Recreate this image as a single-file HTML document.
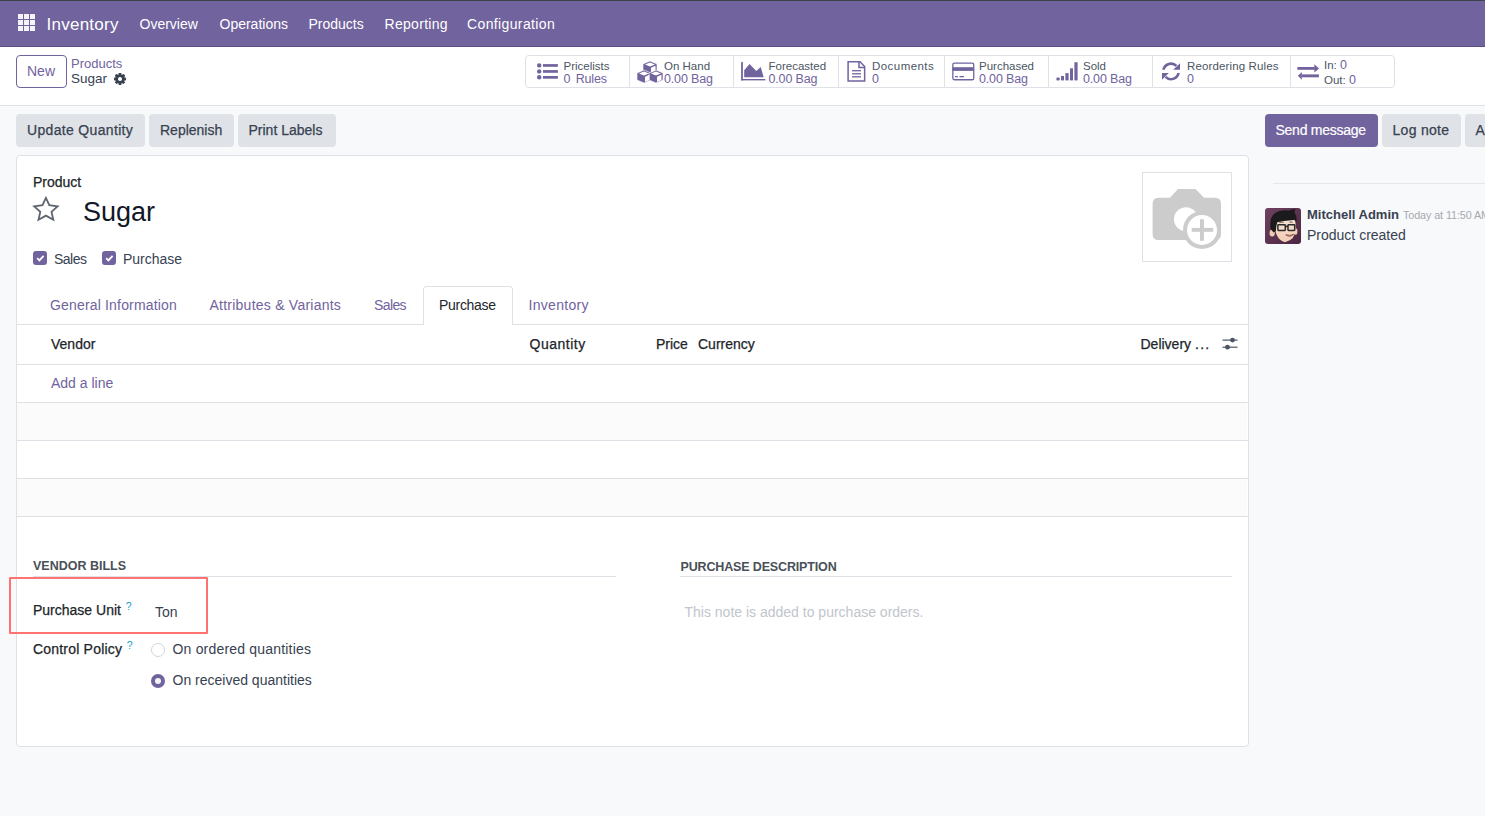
<!DOCTYPE html>
<html><head><meta charset="utf-8"><title>Sugar - Odoo</title>
<style>
html,body{margin:0;padding:0;}
body{width:1485px;height:816px;overflow:hidden;position:relative;background:#f9fafb;font-family:"Liberation Sans",sans-serif;}
.t{position:absolute;white-space:nowrap;line-height:1;}
.b{position:absolute;}
</style></head><body>
<div class="b" style="left:0px;top:0px;width:1485px;height:47px;background:#71639e;"></div>
<div class="b" style="left:0px;top:46px;width:1485px;height:1px;background:#5a4e84;"></div>
<div class="b" style="left:0px;top:0px;width:1485px;height:1px;background:#3d4449;"></div>
<div class="b" style="left:18px;top:14px;width:5px;height:5px;background:#f4f3f8;"></div>
<div class="b" style="left:18px;top:20px;width:5px;height:5px;background:#f4f3f8;"></div>
<div class="b" style="left:18px;top:26px;width:5px;height:5px;background:#f4f3f8;"></div>
<div class="b" style="left:24px;top:14px;width:5px;height:5px;background:#f4f3f8;"></div>
<div class="b" style="left:24px;top:20px;width:5px;height:5px;background:#f4f3f8;"></div>
<div class="b" style="left:24px;top:26px;width:5px;height:5px;background:#f4f3f8;"></div>
<div class="b" style="left:30px;top:14px;width:5px;height:5px;background:#f4f3f8;"></div>
<div class="b" style="left:30px;top:20px;width:5px;height:5px;background:#f4f3f8;"></div>
<div class="b" style="left:30px;top:26px;width:5px;height:5px;background:#f4f3f8;"></div>
<div class="t" style="left:46.5px;top:16.01px;font-size:17px;color:#ffffff;font-weight:400;letter-spacing:0.25px;">Inventory</div>
<div class="t" style="left:139.5px;top:17.45px;font-size:14px;color:#ffffff;font-weight:400;letter-spacing:0px;">Overview</div>
<div class="t" style="left:219.5px;top:17.45px;font-size:14px;color:#ffffff;font-weight:400;letter-spacing:0px;">Operations</div>
<div class="t" style="left:308.5px;top:17.45px;font-size:14px;color:#ffffff;font-weight:400;letter-spacing:0px;">Products</div>
<div class="t" style="left:384.5px;top:17.45px;font-size:14px;color:#ffffff;font-weight:400;letter-spacing:0.3px;">Reporting</div>
<div class="t" style="left:467.0px;top:17.45px;font-size:14px;color:#ffffff;font-weight:400;letter-spacing:0.37px;">Configuration</div>
<div class="b" style="left:0px;top:47px;width:1485px;height:58px;background:#ffffff;"></div>
<div class="b" style="left:0px;top:105px;width:1485px;height:1px;background:#dfe1e5;"></div>
<div class="b" style="left:16px;top:55px;width:51px;height:33px;border:1px solid #71639e;border-radius:4px;box-sizing:border-box;background:#fff;"></div>
<div class="t" style="left:27.0px;top:64.25px;font-size:14px;color:#71639e;font-weight:400;">New</div>
<div class="t" style="left:71.0px;top:56.99px;font-size:13px;color:#71639e;font-weight:400;">Products</div>
<div class="t" style="left:71.0px;top:72.27px;font-size:13.5px;color:#374151;font-weight:400;">Sugar</div>
<svg class="b" style="left:113px;top:72px" width="14" height="14" viewBox="0 0 14 14"><g fill="#374151"><circle cx="7" cy="7" r="4.6"/>
<g transform="translate(7 7)"><rect x="-1.4" y="-6" width="2.8" height="12" rx="0.6"/><rect x="-1.4" y="-6" width="2.8" height="12" rx="0.6" transform="rotate(45)"/><rect x="-1.4" y="-6" width="2.8" height="12" rx="0.6" transform="rotate(90)"/><rect x="-1.4" y="-6" width="2.8" height="12" rx="0.6" transform="rotate(135)"/></g></g><circle cx="7" cy="7" r="2" fill="#fff"/></svg>
<div class="b" style="left:525px;top:55px;width:870px;height:33px;border:1px solid #dee2e6;border-radius:4px;box-sizing:border-box;background:#fff;"></div>
<div class="b" style="left:629px;top:56px;width:1px;height:31px;background:#dee2e6;"></div>
<div class="b" style="left:733px;top:56px;width:1px;height:31px;background:#dee2e6;"></div>
<div class="b" style="left:838px;top:56px;width:1px;height:31px;background:#dee2e6;"></div>
<div class="b" style="left:944px;top:56px;width:1px;height:31px;background:#dee2e6;"></div>
<div class="b" style="left:1048px;top:56px;width:1px;height:31px;background:#dee2e6;"></div>
<div class="b" style="left:1152px;top:56px;width:1px;height:31px;background:#dee2e6;"></div>
<div class="b" style="left:1290px;top:56px;width:1px;height:31px;background:#dee2e6;"></div>
<div class="t" style="left:563.5px;top:60.76px;font-size:11.5px;color:#4b5563;font-weight:400;">Pricelists</div>
<div class="t" style="left:563.5px;top:72.82px;font-size:12.5px;color:#71639e;font-weight:400;letter-spacing:-0.15px;">0 <span style="margin-left:2px">Rules</span></div>
<div class="t" style="left:664.0px;top:60.76px;font-size:11.5px;color:#4b5563;font-weight:400;">On Hand</div>
<div class="t" style="left:664.0px;top:72.82px;font-size:12.5px;color:#71639e;font-weight:400;letter-spacing:-0.15px;">0.00 Bag</div>
<div class="t" style="left:768.5px;top:60.76px;font-size:11.5px;color:#4b5563;font-weight:400;">Forecasted</div>
<div class="t" style="left:768.5px;top:72.82px;font-size:12.5px;color:#71639e;font-weight:400;letter-spacing:-0.15px;">0.00 Bag</div>
<div class="t" style="left:872.0px;top:60.76px;font-size:11.5px;color:#4b5563;font-weight:400;"><span style="letter-spacing:0.45px">Documents</span></div>
<div class="t" style="left:872.0px;top:72.82px;font-size:12.5px;color:#71639e;font-weight:400;letter-spacing:-0.15px;">0</div>
<div class="t" style="left:979.0px;top:60.76px;font-size:11.5px;color:#4b5563;font-weight:400;">Purchased</div>
<div class="t" style="left:979.0px;top:72.82px;font-size:12.5px;color:#71639e;font-weight:400;letter-spacing:-0.15px;">0.00 Bag</div>
<div class="t" style="left:1083.0px;top:60.76px;font-size:11.5px;color:#4b5563;font-weight:400;">Sold</div>
<div class="t" style="left:1083.0px;top:72.82px;font-size:12.5px;color:#71639e;font-weight:400;letter-spacing:-0.15px;">0.00 Bag</div>
<div class="t" style="left:1187.0px;top:60.76px;font-size:11.5px;color:#4b5563;font-weight:400;"><span style="letter-spacing:0.13px">Reordering Rules</span></div>
<div class="t" style="left:1187.0px;top:72.82px;font-size:12.5px;color:#71639e;font-weight:400;letter-spacing:-0.15px;">0</div>
<div class="t" style="left:1324.0px;top:58.66px;font-size:11.5px;color:#4b5563;font-weight:400;">In: <span style="color:#71639e;font-size:12.5px">0</span></div>
<div class="t" style="left:1324.0px;top:73.66px;font-size:11.5px;color:#4b5563;font-weight:400;">Out: <span style="color:#71639e;font-size:12.5px">0</span></div>
<svg class="b" style="left:536px;top:63px" width="23" height="17" viewBox="0 0 23 17"><g fill="#71639e"><circle cx="3.2" cy="2.4" r="2.2"/><circle cx="3.2" cy="8.4" r="2.2"/><circle cx="3.2" cy="14.3" r="2.2"/><rect x="7" y="1.1" width="14.9" height="2.7"/><rect x="7" y="7.1" width="14.9" height="2.7"/><rect x="7" y="13" width="14.9" height="2.7"/></g></svg>
<svg class="b" style="left:636px;top:60px" width="28" height="23" viewBox="0 0 28 23"><g fill="#71639e" stroke="#fff" stroke-width="0.6">
<path d="M14 1 L21 4 L21 11 L14 14 L7 11 L7 4 Z"/><path d="M8 10 L15 13 L15 20 L8 23 L1 20 L1 13 Z"/><path d="M20 10 L27 13 L27 20 L20 23 L13 20 L13 13 Z"/></g>
<g fill="#fff"><path d="M14 6.5 L19 4.5 L14 2.6 L9 4.5Z"/><path d="M8 15.5 L13 13.5 L8 11.6 L3 13.5Z"/><path d="M20 15.5 L25 13.5 L20 11.6 L15 13.5Z"/><path d="M9 16.8 L13.5 14.8 L13.5 20 L9 22Z"/><path d="M21 16.8 L25.5 14.8 L25.5 20 L21 22Z"/><path d="M15 7.8 L19.5 5.8 L19.5 10.5 L15 12.5Z"/></g></svg>
<svg class="b" style="left:741px;top:62px" width="25" height="19" viewBox="0 0 25 19"><g fill="#71639e"><rect x="0.1" y="0.1" width="1.8" height="18.3"/><rect x="0.1" y="17" width="24.2" height="1.4"/><path d="M3.2 15.3 L3.2 8.2 L8.5 2.1 L15.3 9.1 L19.7 5 L22.7 15.3 Z"/></g></svg>
<svg class="b" style="left:847px;top:61px" width="19" height="21" viewBox="0 0 19 21"><g fill="none" stroke="#71639e" stroke-width="1.5"><path d="M1.1 0.85 H13 L17.65 5.6 V19.95 H1.1 Z"/><path d="M12 0.85 V6.5 H17.65"/></g><g fill="#71639e"><rect x="5.1" y="9.05" width="8.9" height="1.3"/><rect x="5.1" y="12.15" width="8.9" height="1.3"/><rect x="5.1" y="15.15" width="8.9" height="1.3"/></g></svg>
<svg class="b" style="left:951px;top:62px" width="24" height="19" viewBox="0 0 24 19"><rect x="1.85" y="1.05" width="20.9" height="16.7" rx="1.6" fill="none" stroke="#71639e" stroke-width="1.3"/><rect x="1.5" y="5.2" width="21.5" height="3.7" fill="#71639e"/><rect x="4.1" y="14" width="2.8" height="1.3" fill="#71639e"/><rect x="8.5" y="14" width="4.4" height="1.3" fill="#71639e"/></svg>
<svg class="b" style="left:1056px;top:62px" width="22" height="19" viewBox="0 0 22 19"><g fill="#71639e"><rect x="0.4" y="15.5" width="3.3" height="2.9" rx="1"/><rect x="5" y="14" width="3" height="4.4"/><rect x="9.4" y="11.1" width="3.2" height="7.3"/><rect x="14" y="6.3" width="3" height="12.1"/><rect x="18.4" y="0.25" width="3.2" height="18.15"/></g></svg>
<svg class="b" style="left:1162px;top:62px" width="19" height="19" viewBox="0 0 19 19"><g fill="#71639e"><g id="rh"><path d="M0.14 7.8 A9 9 0 0 1 15.36 3.04 L13.5 4.87 A6.4 6.4 0 0 0 2.8 7.8 Z"/><path d="M18 1.2 V7.8 H11.2 Z"/></g><use href="#rh" transform="rotate(180 9 9.45)"/></g></svg>
<svg class="b" style="left:1297px;top:62px" width="23" height="19" viewBox="0 0 23 19"><g fill="#71639e"><rect x="0.35" y="5" width="17.3" height="2.8"/><path d="M17.3 2.3 L22 6.4 L17.3 10.4 Z"/><rect x="4.8" y="12.4" width="17.1" height="2.9"/><path d="M4.8 10 L0.9 13.85 L4.8 17.7 Z"/></g></svg>
<div class="b" style="left:0px;top:106px;width:1485px;height:710px;background:#f8f9fa;"></div>
<div class="b" style="left:16px;top:114px;width:129px;height:33px;background:#dfe2e6;border-radius:4px;"></div>
<div class="t" style="left:27.0px;top:123.35px;font-size:14px;color:#374151;font-weight:400;-webkit-text-stroke:0.25px #374151;letter-spacing:0.33px;">Update Quantity</div>
<div class="b" style="left:149px;top:114px;width:85px;height:33px;background:#dfe2e6;border-radius:4px;"></div>
<div class="t" style="left:160.0px;top:123.35px;font-size:14px;color:#374151;font-weight:400;-webkit-text-stroke:0.25px #374151;letter-spacing:0px;">Replenish</div>
<div class="b" style="left:238px;top:114px;width:98px;height:33px;background:#dfe2e6;border-radius:4px;"></div>
<div class="t" style="left:248.5px;top:123.35px;font-size:14px;color:#374151;font-weight:400;-webkit-text-stroke:0.25px #374151;letter-spacing:0px;">Print Labels</div>
<div class="b" style="left:16px;top:155px;width:1233px;height:592px;background:#fff;border:1px solid #dee2e6;border-radius:4px;box-sizing:border-box;"></div>
<div class="t" style="left:33.0px;top:174.95px;font-size:14px;color:#212529;font-weight:400;-webkit-text-stroke:0.25px #212529;">Product</div>
<svg class="b" style="left:32px;top:196px" width="28" height="26" viewBox="0 0 28 26"><path d="M13.9 1.9 L17.3 9.1 L25.6 10.4 L19.5 15.8 L21.3 23.8 L13.9 19.6 L6.5 23.8 L8.3 15.8 L2.2 10.4 L10.5 9.1 Z" fill="none" stroke="#5f6670" stroke-width="1.8" stroke-linejoin="miter"/></svg>
<div class="t" style="left:83.0px;top:198.84px;font-size:27px;color:#111827;font-weight:400;">Sugar</div>
<div class="b" style="left:33px;top:251px;width:14px;height:14px;background:#71639e;border-radius:3px;"></div>
<svg class="b" style="left:33px;top:251px" width="14" height="14" viewBox="0 0 14 14"><path d="M4.2 7.2 L6.4 9.4 L10.6 4.9" fill="none" stroke="#fff" stroke-width="1.8"/></svg>
<div class="b" style="left:102px;top:251px;width:14px;height:14px;background:#71639e;border-radius:3px;"></div>
<svg class="b" style="left:102px;top:251px" width="14" height="14" viewBox="0 0 14 14"><path d="M4.2 7.2 L6.4 9.4 L10.6 4.9" fill="none" stroke="#fff" stroke-width="1.8"/></svg>
<div class="t" style="left:54.0px;top:251.55px;font-size:14px;color:#374151;font-weight:400;letter-spacing:-0.5px;">Sales</div>
<div class="t" style="left:123.0px;top:251.55px;font-size:14px;color:#374151;font-weight:400;">Purchase</div>
<div class="b" style="left:1142px;top:172px;width:90px;height:90px;border:1px solid #dee2e6;box-sizing:border-box;background:#fff;"></div>
<svg class="b" style="left:1142px;top:172px" width="90" height="90" viewBox="0 0 90 90"><g fill="#cccccc">
<path d="M36 17 H53.5 L62 25.8 H73 Q79 25.8 79 31.8 V62 Q79 68 73 68 H16.6 Q10.6 68 10.6 62 V31.8 Q10.6 25.8 16.6 25.8 H28 Z"/></g>
<circle cx="44" cy="47.3" r="12" fill="#fff"/>
<circle cx="60" cy="58" r="19" fill="#cccccc"/><circle cx="60" cy="58" r="15" fill="#fff"/>
<rect x="49.7" y="55.9" width="21.5" height="3.9" fill="#cccccc"/><rect x="58" y="47.3" width="3.9" height="21.5" fill="#cccccc"/></svg>
<div class="b" style="left:16px;top:324px;width:1232px;height:1px;background:#dee2e6;"></div>
<div class="b" style="left:423px;top:286px;width:90px;height:39px;background:#fff;border:1px solid #dee2e6;border-bottom:none;border-radius:4px 4px 0 0;box-sizing:border-box;"></div>
<div class="t" style="left:50.0px;top:298.45px;font-size:14px;color:#71639e;font-weight:400;letter-spacing:0.17px;">General Information</div>
<div class="t" style="left:209.5px;top:298.45px;font-size:14px;color:#71639e;font-weight:400;letter-spacing:0.24px;">Attributes &amp; Variants</div>
<div class="t" style="left:374.0px;top:298.45px;font-size:14px;color:#71639e;font-weight:400;letter-spacing:-0.6px;">Sales</div>
<div class="t" style="left:439.0px;top:298.45px;font-size:14px;color:#212529;font-weight:400;letter-spacing:-0.3px;">Purchase</div>
<div class="t" style="left:528.5px;top:298.45px;font-size:14px;color:#71639e;font-weight:400;letter-spacing:0.3px;">Inventory</div>
<div class="t" style="left:51.0px;top:337.15px;font-size:14px;color:#212529;font-weight:400;-webkit-text-stroke:0.25px #212529;">Vendor</div>
<div class="t" style="left:529.5px;top:337.15px;font-size:14px;color:#212529;font-weight:400;-webkit-text-stroke:0.25px #212529;"><span style="letter-spacing:0.5px">Quantity</span></div>
<div class="t" style="left:656.0px;top:337.15px;font-size:14px;color:#212529;font-weight:400;-webkit-text-stroke:0.25px #212529;">Price</div>
<div class="t" style="left:698.0px;top:337.15px;font-size:14px;color:#212529;font-weight:400;-webkit-text-stroke:0.25px #212529;">Currency</div>
<div class="t" style="left:1140.5px;top:337.15px;font-size:14px;color:#212529;font-weight:400;-webkit-text-stroke:0.25px #212529;">Delivery <span style="letter-spacing:1.3px">...</span></div>
<svg class="b" style="left:1222px;top:337px" width="16" height="14" viewBox="0 0 16 14"><g fill="#4b5563"><rect x="0.5" y="2.5" width="15" height="1.2"/><rect x="0.5" y="9.6" width="15" height="1.2"/><circle cx="10.5" cy="3.1" r="2.4"/><circle cx="5.5" cy="10.2" r="2.4"/></g></svg>
<div class="b" style="left:17px;top:364px;width:1231px;height:1px;background:#dee2e6;"></div>
<div class="b" style="left:17px;top:402px;width:1231px;height:1px;background:#dee2e6;"></div>
<div class="b" style="left:17px;top:440px;width:1231px;height:1px;background:#dee2e6;"></div>
<div class="b" style="left:17px;top:478px;width:1231px;height:1px;background:#dee2e6;"></div>
<div class="b" style="left:17px;top:516px;width:1231px;height:1px;background:#dee2e6;"></div>
<div class="b" style="left:17px;top:403px;width:1230px;height:37px;background:#fbfbfb;"></div>
<div class="b" style="left:17px;top:479px;width:1230px;height:37px;background:#fbfbfb;"></div>
<div class="t" style="left:51.0px;top:375.65px;font-size:14px;color:#71639e;font-weight:400;">Add a line</div>
<div class="t" style="left:33.0px;top:560.02px;font-size:12.5px;color:#495057;font-weight:700;">VENDOR BILLS</div>
<div class="b" style="left:33px;top:576px;width:583px;height:1px;background:#dee2e6;"></div>
<div class="t" style="left:680.5px;top:560.62px;font-size:12.5px;color:#495057;font-weight:700;letter-spacing:-0.15px;">PURCHASE DESCRIPTION</div>
<div class="b" style="left:680px;top:576px;width:552px;height:1px;background:#dee2e6;"></div>
<div class="t" style="left:33.0px;top:603.05px;font-size:14px;color:#212529;font-weight:400;-webkit-text-stroke:0.25px #212529;">Purchase Unit</div>
<div class="t" style="left:125.8px;top:601.11px;font-size:10.5px;color:#1b9dc9;font-weight:400;">?</div>
<div class="t" style="left:155.0px;top:604.95px;font-size:14px;color:#374151;font-weight:400;">Ton</div>
<div class="t" style="left:33.0px;top:642.05px;font-size:14px;color:#212529;font-weight:400;-webkit-text-stroke:0.25px #212529;letter-spacing:0.2px;">Control Policy</div>
<div class="t" style="left:126.8px;top:639.91px;font-size:10.5px;color:#1b9dc9;font-weight:400;">?</div>
<div class="b" style="left:151px;top:643px;width:14px;height:14px;border:1px solid #d1d5db;border-radius:50%;box-sizing:border-box;background:#fff;"></div>
<div class="t" style="left:172.5px;top:642.05px;font-size:14px;color:#374151;font-weight:400;letter-spacing:0.19px;">On ordered quantities</div>
<div class="b" style="left:151px;top:674px;width:14px;height:14px;background:#71639e;border-radius:50%;"></div>
<div class="b" style="left:155px;top:678px;width:6px;height:6px;background:#f3f4f6;border-radius:50%;"></div>
<div class="t" style="left:172.5px;top:673.15px;font-size:14px;color:#374151;font-weight:400;">On received quantities</div>
<div class="t" style="left:684.5px;top:604.85px;font-size:14px;color:#c1c5cc;font-weight:400;">This note is added to purchase orders.</div>
<div class="b" style="left:9px;top:577px;width:199px;height:57px;border:2px solid #ff7272;box-sizing:border-box;border-radius:1px;"></div>
<div class="b" style="left:1265px;top:114px;width:113px;height:33px;background:#71639e;border-radius:4px;"></div>
<div class="t" style="left:1275.5px;top:123.35px;font-size:14px;color:#ffffff;font-weight:400;-webkit-text-stroke:0.2px #fff;letter-spacing:-0.25px;">Send message</div>
<div class="b" style="left:1382px;top:114px;width:79px;height:33px;background:#dfe2e6;border-radius:4px;"></div>
<div class="t" style="left:1392.5px;top:123.35px;font-size:14px;color:#374151;font-weight:400;-webkit-text-stroke:0.25px #374151;letter-spacing:0.3px;">Log note</div>
<div class="b" style="left:1465px;top:114px;width:40px;height:33px;background:#dfe2e6;border-radius:4px;"></div>
<div class="t" style="left:1475.5px;top:123.35px;font-size:14px;color:#374151;font-weight:400;-webkit-text-stroke:0.25px #374151;">Activities</div>
<div class="b" style="left:1273px;top:183px;width:212px;height:1px;background:#e5e7eb;"></div>
<svg class="b" style="left:1265px;top:208px" width="36" height="36" viewBox="0 0 36 36"><defs><linearGradient id="ag" x1="0" y1="0" x2="1" y2="1"><stop offset="0" stop-color="#6e4262"/><stop offset="1" stop-color="#4b2640"/></linearGradient><linearGradient id="fg" x1="0" y1="0" x2="0" y2="1"><stop offset="0" stop-color="#f6e2d2"/><stop offset="1" stop-color="#f2cdb4"/></linearGradient></defs>
<rect width="36" height="36" rx="3" fill="url(#ag)"/>
<ellipse cx="7.2" cy="25" rx="2.6" ry="3.6" fill="#f0ccb2"/><ellipse cx="30.6" cy="23.5" rx="1.8" ry="3.2" fill="#f0ccb2"/>
<path d="M9.8 13 Q8.8 31 20 34.2 Q30.5 32 30.8 20 L30.2 12 Z" fill="url(#fg)"/>
<path d="M5.6 21 Q4 10 9.5 5.5 Q15.5 1.5 24 2.6 L30.2 0.8 L29.6 4.8 Q32.4 8.5 31.3 14.5 L29.4 11.8 Q20 12.6 12.3 14.3 Q11.2 17.5 10.8 23 L8.6 24.5 Z" fill="#1b1b1d"/>
<g fill="none" stroke="#5a4a44" stroke-width="0.9"><path d="M14.3 14.7 Q16.5 13.8 18.5 14.4"/><path d="M24.5 14.2 Q26 13.7 27.6 14.3"/></g>
<g fill="none" stroke="#2a2a2a" stroke-width="1.5"><rect x="12.9" y="16.7" width="7.4" height="5.7" rx="0.6"/><rect x="23" y="16.7" width="6.7" height="5.7" rx="0.6"/><path d="M20.3 18.4 H23"/></g>
<path d="M20.8 26.8 Q24.8 29.8 28.6 26.4 Q24.8 28.2 20.8 26.8Z" fill="#fff" stroke="#8a4a44" stroke-width="0.9"/></svg>
<div class="t" style="left:1307.0px;top:207.79px;font-size:13px;color:#374151;font-weight:700;">Mitchell Admin</div>
<div class="t" style="left:1403.0px;top:210.46px;font-size:10.8px;color:#a5a9b0;font-weight:400;letter-spacing:-0.1px;">Today at 11:50 AM</div>
<div class="t" style="left:1307.0px;top:227.85px;font-size:14px;color:#374151;font-weight:400;">Product created</div>
</body></html>
